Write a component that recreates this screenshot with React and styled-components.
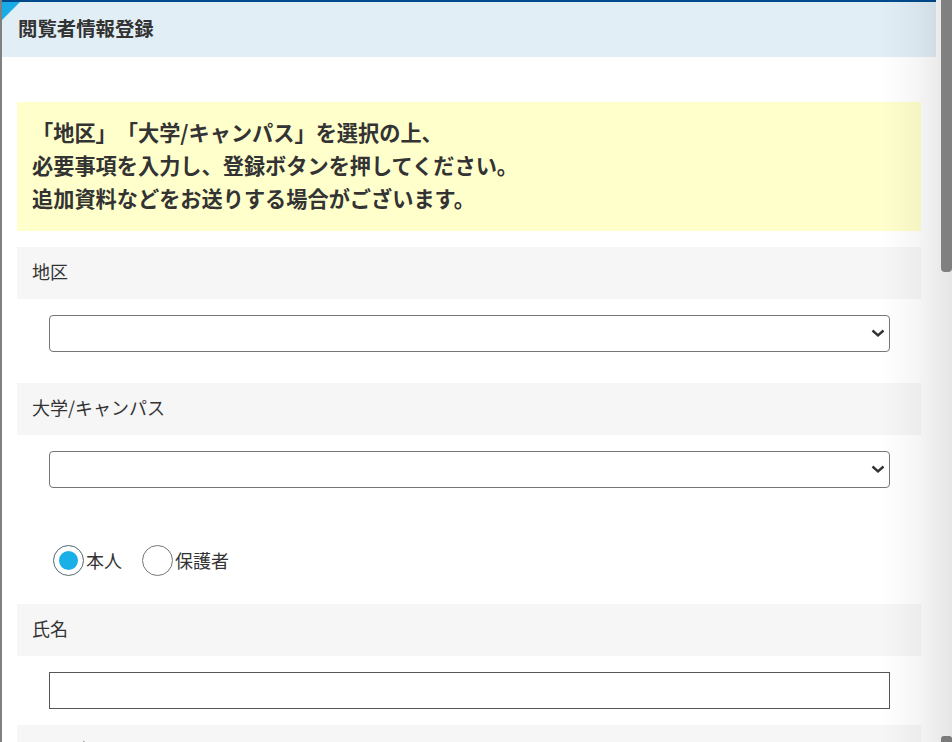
import React from "react";
import styled, { createGlobalStyle } from "styled-components";

const Global = createGlobalStyle`
  html, body { margin: 0; padding: 0; height: 100%; overflow: hidden; background: #fff; }
  body {
    font-family: "Noto Sans CJK JP", "Noto Sans", sans-serif;
    color: #333;
    text-spacing-trim: space-all;
    font-feature-settings: "chws" 0, "halt" 0;
  }
  * { box-sizing: border-box; }
`;

const Page = styled.div`
  position: relative;
  display: flex;
  height: 742px;
  width: 952px;
  overflow: hidden;
`;

const LeftEdge = styled.div`
  width: 2px;
  flex: none;
  background: #808080;
`;

const Panel = styled.div`
  position: relative;
  width: 934px;
  flex: none;
  display: flex;
  flex-direction: column;
  border-top: 2px solid #004a8c;
  background: #fff;
`;

const Header = styled.div`
  position: relative;
  height: 55px;
  flex: none;
  display: flex;
  align-items: center;
  padding: 0 0 4px 16px;
  background: #e1eef5;
  font-size: 19.4px;
  font-weight: 700;
  color: #333;
`;

const Corner = styled.div`
  position: absolute;
  left: 0;
  top: 0;
  width: 0;
  height: 0;
  border-top: 18px solid #19abe6;
  border-right: 18px solid transparent;
`;

const Body = styled.div`
  padding: 45px 15px 0;
`;

const Notice = styled.div`
  background: #ffffcc;
  padding: 13px 15px 17px;
  font-size: 21.2px;
  font-weight: 700;
  line-height: 33px;
  color: #333;
  white-space: nowrap;
`;

const FieldLabel = styled.div`
  height: 52px;
  display: flex;
  align-items: center;
  padding: 0 15px 4px;
  margin-top: ${(p) => p.$top ?? 16}px;
  background: #f6f6f6;
  font-size: 18px;
  color: #333;
`;

const SelectWrap = styled.div`
  position: relative;
  margin: 16px 31px 0 32px;
`;

const Select = styled.select`
  display: block;
  width: 100%;
  height: 37px;
  border: 1px solid #767676;
  border-radius: 4px;
  background: #fff;
  appearance: none;
  -webkit-appearance: none;
  font-size: 16px;
  font-family: inherit;
`;

const Chevron = styled.svg`
  position: absolute;
  right: 5px;
  top: 13px;
  width: 14px;
  height: 10px;
  pointer-events: none;
`;

const RadioRow = styled.div`
  display: flex;
  align-items: center;
  margin: 57px 0 0 36px;
  height: 30px;
  gap: 20px;
`;

const RadioLabel = styled.label`
  display: flex;
  align-items: center;
  gap: 2px;
  font-size: 18px;
  color: #333;
`;

const Radio = styled.input.attrs({ type: "radio" })`
  appearance: none;
  -webkit-appearance: none;
  margin: 0;
  width: 31px;
  height: 31px;
  border-radius: 50%;
  border: 1px solid #767676;
  background: #fff;
  &:checked {
    background: #19b0e8;
    box-shadow: inset 0 0 0 5px #fff;
  }
`;

const TextInput = styled.input`
  display: block;
  width: calc(100% - 63px);
  height: 37px;
  margin: 16px 31px 0 32px;
  border: 1px solid #555;
  border-radius: 0;
  font-size: 16px;
`;

const Shade = styled.div`
  position: absolute;
  top: 0;
  right: 0;
  bottom: 0;
  width: 72px;
  pointer-events: none;
  background: linear-gradient(to right, rgba(0, 0, 0, 0), rgba(0, 0, 0, 0.035) 50%, rgba(0, 0, 0, 0.1));
`;

const Gap = styled.div`
  width: 5px;
  flex: none;
  background: #fff;
`;

const ScrollTrack = styled.div`
  position: relative;
  width: 11px;
  flex: none;
  background: #fff;
`;

const Thumb = styled.div`
  position: absolute;
  top: 0;
  left: 0;
  right: 0;
  height: 272px;
  background: #808080;
  border-radius: 0 0 4px 4px;
  z-index: 2;
`;

const DownArrow = styled.div`
  position: absolute;
  left: 0;
  bottom: 0;
  width: 11px;
  height: 6px;
  background: #7a7a7a;
  border-radius: 3px 3px 0 0;
  z-index: 2;
`;

function SelectField({ label, top }) {
  return (
    <>
      <FieldLabel $top={top}>{label}</FieldLabel>
      <SelectWrap>
        <Select defaultValue="">
          <option value=""></option>
        </Select>
        <Chevron viewBox="0 0 14 10">
          <path d="M1.5 2.5 L7 7.5 L12.5 2.5" fill="none" stroke="#333" strokeWidth="2.4" />
        </Chevron>
      </SelectWrap>
    </>
  );
}

export default function App() {
  return (
    <>
      <Global />
      <Page>
        <LeftEdge />
        <Panel>
          <Header>
            <Corner />
            閲覧者情報登録
          </Header>
          <Body>
            <Notice>
              「地区」「大学/キャンパス」を選択の上、
              <br />
              必要事項を入力し、登録ボタンを押してください。
              <br />
              追加資料などをお送りする場合がございます。
            </Notice>
            <SelectField label="地区" />
            <SelectField label="大学/キャンパス" top={31} />
            <RadioRow>
              <RadioLabel>
                <Radio name="who" defaultChecked />
                本人
              </RadioLabel>
              <RadioLabel>
                <Radio name="who" />
                保護者
              </RadioLabel>
            </RadioRow>
            <FieldLabel $top={29}>氏名</FieldLabel>
            <TextInput />
            <FieldLabel>ふりがな</FieldLabel>
          </Body>
        </Panel>
        <Gap />
        <ScrollTrack>
          <Thumb />
          <DownArrow />
        </ScrollTrack>
        <Shade />
      </Page>
    </>
  );
}
